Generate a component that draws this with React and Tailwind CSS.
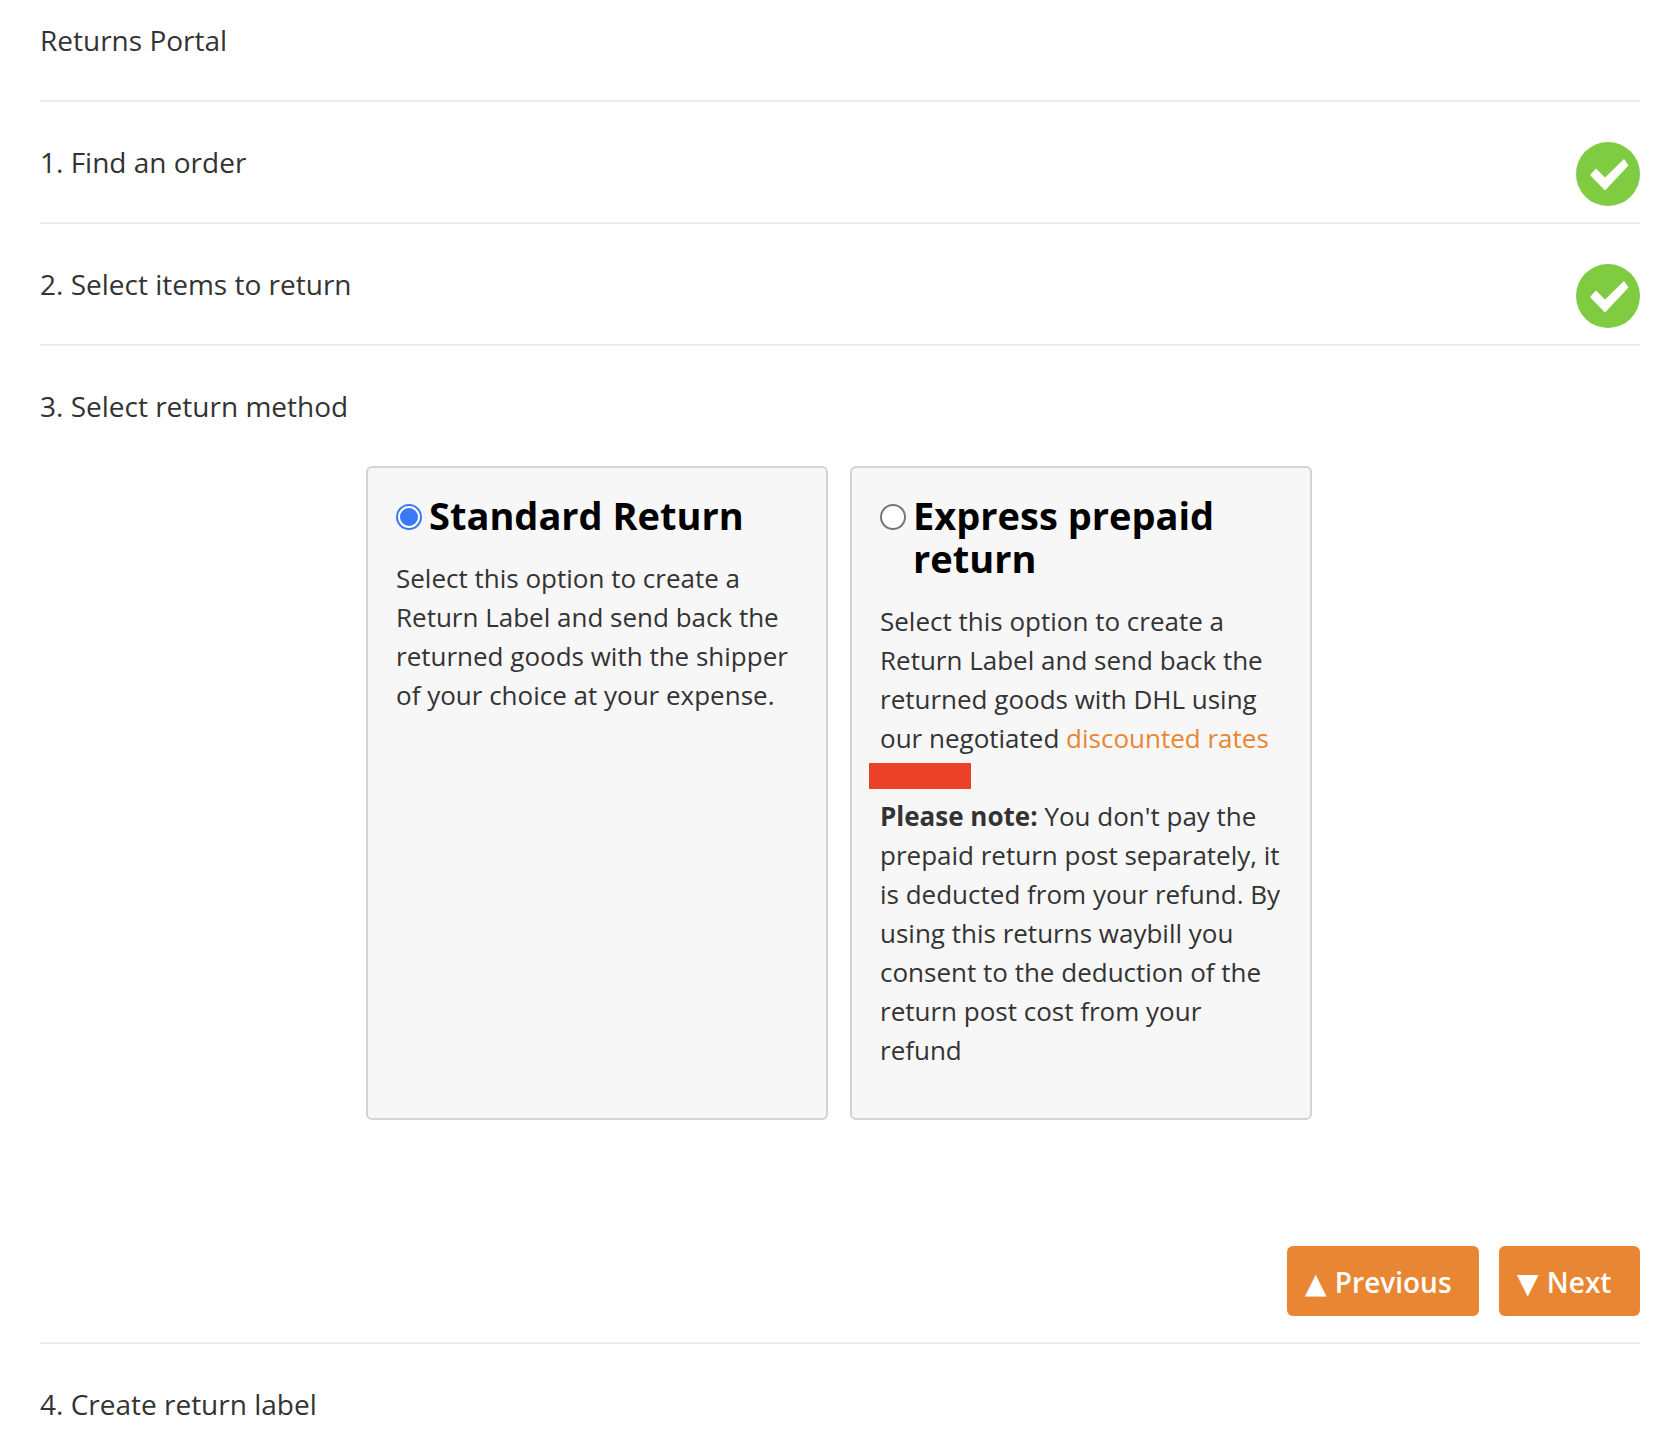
import React from "react";

function CheckBadge() {
  return (
    <svg viewBox="0 0 64 64" className="w-16 h-16 shrink-0">
      <circle cx="32" cy="32" r="32" fill="#7fcb41" />
      <path d="M14 33L20 26.5L29 35.5L48 17L52.5 23.5L29 48.5Z" fill="#fff" />
    </svg>
  );
}

function Step({ label, done }) {
  return (
    <div className="flex justify-between h-[122px] pt-10 border-b-2 border-[#ebebeb]">
      <div className="text-[28px] leading-10">{label}</div>
      {done && <CheckBadge />}
    </div>
  );
}

function Radio({ checked }) {
  if (checked) {
    return (
      <span className="w-[26px] h-[26px] shrink-0 mt-[10px] rounded-full border-2 border-[#3b78f6] bg-white flex items-center justify-center">
        <span className="w-[18px] h-[18px] rounded-full bg-[#3b78f6]" />
      </span>
    );
  }
  return <span className="w-[26px] h-[26px] shrink-0 mt-[10px] rounded-full border-2 border-[#767676] bg-white" />;
}

function OptionCard({ title, checked, children }) {
  return (
    <div className="w-[461.5px] h-[654px] bg-[#f7f7f7] border-2 border-[#d3d3d3] rounded-md pl-[28px] pr-[24px] pt-[26px]">
      <div className="flex gap-[7px] mb-[22px]">
        <Radio checked={checked} />
        <h3 className="text-[38px] leading-[43px] font-bold text-black">{title}</h3>
      </div>
      {children}
    </div>
  );
}

function NavButton({ glyph, label, width }) {
  return (
    <button className={`h-[70px] ${width} rounded-md bg-[#e98633] text-white text-[28px] font-semibold text-left pl-[18px] pt-[3px]`}>
      <span className="font-['DejaVu_Sans',sans-serif] mr-[1px]">{glyph}</span> {label}
    </button>
  );
}

export default function App() {
  return (
    <div className="px-10 bg-white text-[#333] font-['Open_Sans',sans-serif] h-[1444px] overflow-hidden">
      <div className="h-[102px] pt-[19px] border-b-2 border-[#ebebeb] text-[28px] leading-[42px]">Returns Portal</div>
      <Step label="1. Find an order" done />
      <Step label="2. Select items to return" done />

      <div className="h-[998px] pt-[39px] border-b-2 border-[#ebebeb]">
        <div className="text-[28px] leading-[42px]">3. Select return method</div>
        <div className="flex justify-center gap-[22.5px] mt-[39px] ml-[-2.5px]">
          <OptionCard title="Standard Return" checked>
            <p className="text-[26px] leading-[39px]">
              Select this option to create a Return Label and send back the returned goods with the shipper of your choice at your expense.
            </p>
          </OptionCard>
          <OptionCard title="Express prepaid return">
            <p className="text-[26px] leading-[39px]">
              Select this option to create a Return Label and send back the returned goods with DHL using our negotiated{" "}
              <a className="text-[#e98633]">discounted rates</a>
            </p>
            <div className="w-[102px] h-[26px] -ml-[11px] mt-[5px] mb-[8px] bg-[#ec4027]" />
            <p className="text-[26px] leading-[39px]">
              <strong>Please note:</strong> You don't pay the prepaid return post separately, it is deducted from your refund. By using this returns waybill you consent to the deduction of the return post cost from your refund
            </p>
          </OptionCard>
        </div>
        <div className="flex justify-end gap-5 mt-[126px]">
          <NavButton glyph="▲" label="Previous" width="w-[192px]" />
          <NavButton glyph="▼" label="Next" width="w-[141px]" />
        </div>
      </div>

      <div className="pt-[39px] text-[28px] leading-[42px]">4. Create return label</div>
    </div>
  );
}
